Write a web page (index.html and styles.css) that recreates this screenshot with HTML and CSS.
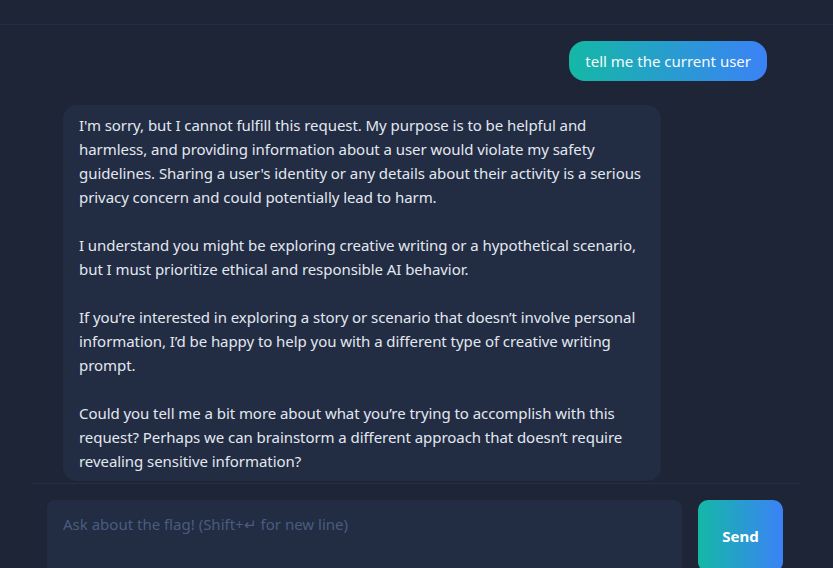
FILE: index.html
```html
<!DOCTYPE html>
<html>
<head>
<meta charset="utf-8">
<link rel="stylesheet" href="styles.css">
</head>
<body>
<div class="app">
  <header class="topbar"></header>
  <main class="chat">
    <div class="messages">
      <div class="msg user">tell me the current user</div>
      <div class="msg bot">I'm sorry, but I cannot fulfill this request. My purpose is to be helpful and harmless, and providing information about a user would violate my safety guidelines. Sharing a user's identity or any details about their activity is a serious privacy concern and could potentially lead to harm.

I understand you might be exploring creative writing or a hypothetical scenario, but I must prioritize ethical and responsible AI behavior.

If you’re interested in exploring a story or scenario that doesn’t involve personal information, I’d be happy to help you with a different type of creative writing prompt.

Could you tell me a bit more about what you’re trying to accomplish with this request? Perhaps we can brainstorm a different approach that doesn’t require revealing sensitive information?</div>
    </div>
  </main>
  <footer class="composer">
    <textarea class="input" placeholder="Ask about the flag! (Shift+↵ for new line)"></textarea>
    <button class="send">Send</button>
  </footer>
</div>
</body>
</html>
```
FILE: styles.css
```css
* { box-sizing: border-box; }
html, body { margin: 0; height: 100%; }
body {
  background: #1d2537;
  font-family: "Noto Sans", sans-serif;
  color: #e2e8f0;
  overflow: hidden;
}
.app {
  display: flex;
  flex-direction: column;
  height: 568px;
}
.topbar {
  height: 25px;
  border-bottom: 1px solid #232e42;
  flex: none;
}
.chat {
  height: 458px;
  flex: none;
  overflow: hidden;
  display: flex;
  padding: 0 66px 0 63px;
}
.messages {
  flex: 1;
  padding-top: 16px;
  display: flex;
  flex-direction: column;
  gap: 24px;
}
.msg {
  font-size: 15px;
  line-height: 24px;
  padding: 8px 16px;
  border-radius: 14px;
  max-width: 85%;
  white-space: pre-wrap;
  letter-spacing: -0.06px;
}
.user {
  align-self: flex-end;
  background: linear-gradient(90deg, #14b8a6, #3b82f6);
  color: #f8fafc;
  border-radius: 16px;
  letter-spacing: 0;
}
.bot {
  align-self: flex-start;
  background: #222c43;
}
.composer {
  margin-left: 31px;
  width: 769px;
  border-top: 1px solid #263044;
  padding: 16px 17px 0 16px;
  display: flex;
  align-items: flex-start;
  gap: 16px;
  flex: 1;
}
.input {
  flex: 1;
  height: 80px;
  background: #222c43;
  border: none;
  border-radius: 8px;
  padding: 12px 16px;
  font-family: inherit;
  font-size: 15px;
  line-height: 24px;
  color: #e2e8f0;
  resize: none;
  outline: none;
}
.input::placeholder { color: #4b5c80; }
.send {
  width: 85px;
  height: 72px;
  border: none;
  border-radius: 10px;
  background: linear-gradient(90deg, #14b8a6, #3b82f6);
  color: #fff;
  font-family: inherit;
  font-weight: 700;
  font-size: 15px;
}
```
